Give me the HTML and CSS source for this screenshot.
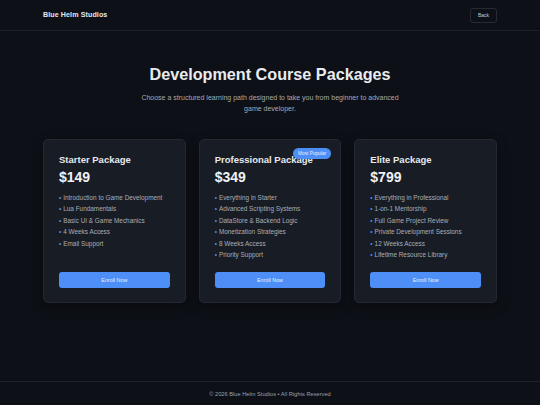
FILE: index.html
```html
<!DOCTYPE html>
<html>
<head>
<meta charset="utf-8">
<link rel="stylesheet" href="styles.css">
</head>
<body>
<header class="topbar">
  <div class="brand">Blue Helm Studios</div>
  <button class="back">Back</button>
</header>
<main class="main">
  <h1 class="title">Development Course Packages</h1>
  <p class="subtitle">Choose a structured learning path designed to take you from beginner to advanced game developer.</p>
  <div class="cards">
    <div class="card">
      <h2 class="card-title">Starter Package</h2>
      <div class="price">$149</div>
      <ul class="features">
        <li>Introduction to Game Development</li>
        <li>Lua Fundamentals</li>
        <li>Basic UI &amp; Game Mechanics</li>
        <li>4 Weeks Access</li>
        <li>Email Support</li>
      </ul>
      <button class="enroll">Enroll Now</button>
    </div>
    <div class="card featured">
      <span class="badge">Most Popular</span>
      <h2 class="card-title">Professional Package</h2>
      <div class="price">$349</div>
      <ul class="features">
        <li>Everything in Starter</li>
        <li>Advanced Scripting Systems</li>
        <li>DataStore &amp; Backend Logic</li>
        <li>Monetization Strategies</li>
        <li>8 Weeks Access</li>
        <li>Priority Support</li>
      </ul>
      <button class="enroll">Enroll Now</button>
    </div>
    <div class="card">
      <h2 class="card-title">Elite Package</h2>
      <div class="price">$799</div>
      <ul class="features">
        <li>Everything in Professional</li>
        <li>1-on-1 Mentorship</li>
        <li>Full Game Project Review</li>
        <li>Private Development Sessions</li>
        <li>12 Weeks Access</li>
        <li>Lifetime Resource Library</li>
      </ul>
      <button class="enroll">Enroll Now</button>
    </div>
  </div>
</main>
<footer class="footer">© 2026 Blue Helm Studios • All Rights Reserved</footer>
</body>
</html>
```

FILE: styles.css
```css
* { box-sizing: border-box; }
html, body { margin: 0; padding: 0; }
body {
  background: #0d1016;
  color: #e6e9ee;
  font-family: "Liberation Sans", Arial, sans-serif;
  width: 540px;
  height: 405px;
  display: flex;
  flex-direction: column;
}
.topbar {
  height: 31px;
  border-bottom: 1px solid #1b1f27;
  display: flex;
  align-items: center;
  justify-content: space-between;
  padding: 0 43px;
}
.brand {
  font-size: 7.1px;
  font-weight: bold;
  color: #e6e9ee;
  letter-spacing: 0.1px;
}
.back {
  font-family: inherit;
  background: transparent;
  border: 1px solid #262b36;
  color: #c8ccd4;
  font-size: 5px;
  border-radius: 3px;
  padding: 0 7px;
  height: 15px;
}
.main {
  width: 454px;
  margin: 0 auto;
  flex: 1;
  display: flex;
  flex-direction: column;
  align-items: center;
}
.title {
  margin: 33px 0 0;
  font-size: 16.2px;
  line-height: 20px;
  font-weight: bold;
  color: #e8ebef;
}
.subtitle {
  margin: 8px 0 0;
  width: 268px;
  text-align: center;
  font-size: 7px;
  line-height: 11px;
  color: #a4aab4;
}
.cards {
  margin-top: 25px;
  width: 100%;
  display: grid;
  grid-template-columns: repeat(3, 1fr);
  gap: 13px;
}
.card {
  position: relative;
  height: 164px;
  background: #181c24;
  border: 1px solid #232834;
  border-radius: 5px;
  padding: 14px 15px 14px 15px;
  display: flex;
  flex-direction: column;
  box-shadow: 0 4px 12px rgba(0,0,0,0.35);
}
.card-title {
  margin: 0;
  font-size: 9.5px;
  line-height: 12px;
  font-weight: bold;
  color: #e6e9ee;
}
.price {
  margin-top: 3px;
  font-size: 14px;
  line-height: 17px;
  font-weight: bold;
  color: #f0f2f5;
}
.features {
  list-style: none;
  margin: 6px 0 0;
  padding: 0;
}
.features li {
  font-size: 6.4px;
  line-height: 11.4px;
  color: #a8aeb8;
}
.features li::before {
  content: "•";
  color: #4d8ef7;
  margin-right: 2px;
}
.enroll {
  margin-top: auto;
  height: 16px;
  width: 100%;
  border: none;
  border-radius: 3px;
  background: #4d8ef7;
  color: #e8efff;
  font-family: inherit;
  font-size: 5.4px;
}
.badge {
  position: absolute;
  top: 8px;
  right: 9px;
  background: #4d8ef7;
  color: #e8efff;
  font-size: 4.8px;
  line-height: 11px;
  padding: 0 5px;
  border-radius: 6px;
}
.footer {
  height: 24px;
  border-top: 1px solid #1f232c;
  display: flex;
  align-items: center;
  justify-content: center;
  font-size: 5.7px;
  color: #9ba1ab;
}
```
